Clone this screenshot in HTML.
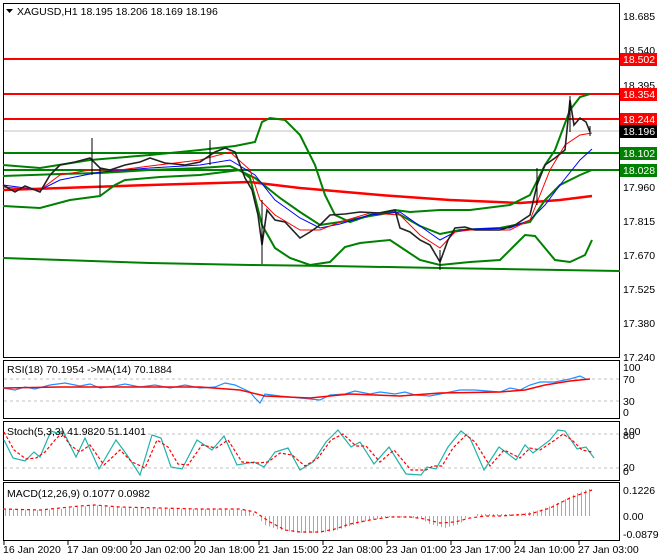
<!DOCTYPE html>
<html><head><meta charset="utf-8"><style>
html,body{margin:0;padding:0;background:#fff;width:660px;height:560px;overflow:hidden}
svg text{font-family:"Liberation Sans",sans-serif;font-size:10.5px;fill:#000}
</style></head><body>
<svg width="660" height="560" viewBox="0 0 660 560" xmlns="http://www.w3.org/2000/svg">
<defs>
<pattern id="bars" x="0" y="0" width="4" height="10" patternUnits="userSpaceOnUse">
<rect x="1" y="0" width="1" height="10" fill="#a8a8a8"/>
</pattern>
</defs>
<rect width="660" height="560" fill="#fff"/>
<g fill="none" stroke="#000" stroke-width="1">
<rect x="3.5" y="3.5" width="616" height="354"/>
<rect x="3.5" y="360.5" width="616" height="58"/>
<rect x="3.5" y="421.5" width="616" height="59"/>
<rect x="3.5" y="482.5" width="616" height="58"/>
</g>
<g fill="none">
<line x1="4" y1="131" x2="619" y2="131" stroke="#c0c0c0"/>
<line x1="4" y1="59" x2="619" y2="59" stroke="#f00" stroke-width="2"/>
<line x1="4" y1="94" x2="619" y2="94" stroke="#f00" stroke-width="2"/>
<line x1="4" y1="119" x2="619" y2="119" stroke="#f00" stroke-width="2"/>
<line x1="4" y1="153" x2="619" y2="153" stroke="#008000" stroke-width="2"/>
<line x1="4" y1="170" x2="619" y2="170" stroke="#008000" stroke-width="2"/>
<polyline stroke="#008000" stroke-width="2" points="3,258 150,263 250,265 330,266 440,268 620,271"/>
<polyline stroke="#f00" stroke-width="2.5" points="3,190 150,185 250,182 300,188 380,195 450,200 520,203 560,200 592,196"/>
<polyline stroke="#008000" stroke-width="2" points="3,165 40,168 90,160 150,155 200,150 235,146 255,142 262,122 270,118 285,120 300,135 315,165 325,195 335,215 350,222 370,215 395,210 410,212 440,210 470,210 510,205 530,195 545,165 555,150 570,110 580,97 590,94"/>
<polyline stroke="#008000" stroke-width="2" points="3,206 40,208 70,200 100,196 115,185 125,180 160,177 200,175 240,170 250,178 262,225 275,248 290,258 310,265 330,262 345,247 360,243 390,240 405,250 420,260 440,265 470,262 500,260 515,245 525,235 535,236 545,248 555,260 570,262 585,255 592,240"/>
<polyline stroke="#008000" stroke-width="2" points="3,176 60,174 100,173 150,170 200,168 230,166 255,178 280,198 300,212 320,225 340,222 370,216 395,212 420,226 440,234 460,230 500,228 530,222 545,200 560,185 580,175 592,170"/>
<polyline stroke="#00f" stroke-width="1" points="3,185 40,190 60,180 100,172 150,168 200,165 230,160 255,175 275,200 300,218 320,228 340,224 370,215 400,212 420,226 440,240 455,232 470,229 510,228 530,220 545,205 560,185 580,160 592,149"/>
<polyline stroke="#f00" stroke-width="1" points="3,187 40,190 60,175 90,170 120,170 150,166 200,160 230,152 250,170 260,200 275,215 300,230 320,230 340,222 370,213 400,215 420,235 440,248 455,232 470,230 510,230 530,220 540,195 550,170 565,145 580,135 592,133"/>
</g>
<polyline fill="none" stroke="#222" stroke-width="1.6" points="3,185 15,192 25,186 40,192 50,175 60,165 75,162 90,158 100,168 110,170 125,165 140,162 150,158 165,163 185,165 200,162 215,152 225,148 235,152 245,178 252,190 258,215 262,245 267,210 275,220 285,222 300,238 310,232 320,225 330,215 345,214 360,212 380,213 395,210 400,228 410,232 420,240 430,245 440,262 448,240 455,228 465,227 475,230 500,230 515,225 530,215 537,185 545,165 555,158 565,150 570,100 574,125 580,118 586,122 590,132"/>
<g stroke="#000" stroke-width="1">
<line x1="92" y1="138" x2="92" y2="175"/><line x1="100" y1="168" x2="100" y2="195"/>
<line x1="262" y1="200" x2="262" y2="264"/><line x1="210" y1="140" x2="210" y2="165"/>
<line x1="440" y1="250" x2="440" y2="270"/><line x1="570" y1="96" x2="570" y2="132"/>
<line x1="537" y1="168" x2="537" y2="205"/><line x1="590" y1="126" x2="590" y2="136"/>
</g>
<g>
<text x="623" y="20">18.685</text><text x="623" y="54">18.540</text>
<text x="623" y="89">18.395</text><text x="623" y="191">17.960</text>
<text x="623" y="225">17.815</text><text x="623" y="259">17.670</text>
<text x="623" y="293">17.525</text><text x="623" y="327">17.380</text>
<text x="623" y="361">17.240</text>
<rect x="620" y="53" width="37" height="13" fill="#f00"/><text x="623" y="63" style="fill:#fff">18.502</text>
<rect x="620" y="88" width="37" height="13" fill="#f00"/><text x="623" y="98" style="fill:#fff">18.354</text>
<rect x="620" y="113" width="37" height="13" fill="#f00"/><text x="623" y="123" style="fill:#fff">18.244</text>
<rect x="620" y="125" width="37" height="13" fill="#000"/><text x="623" y="135" style="fill:#fff">18.196</text>
<rect x="620" y="147" width="37" height="13" fill="#008000"/><text x="623" y="157" style="fill:#fff">18.102</text>
<rect x="620" y="164" width="37" height="13" fill="#008000"/><text x="623" y="174" style="fill:#fff">18.028</text>
</g>
<polygon points="6,9 13,9 9.5,13" fill="#000"/>
<text x="17" y="15">XAGUSD,H1  18.195 18.206 18.169 18.196</text>
<!-- RSI -->
<g fill="none">
<line x1="4" y1="379" x2="619" y2="379" stroke="#c0c0c0" stroke-dasharray="3,3"/>
<line x1="4" y1="401" x2="619" y2="401" stroke="#c0c0c0" stroke-dasharray="3,3"/>
<polyline stroke="#1e90ff" stroke-width="1.2" points="3,388 15,390 25,387 35,389 50,385 65,383 80,386 90,384 100,388 115,386 125,384 140,387 155,385 170,388 185,385 200,388 215,387 225,383 235,385 250,392 255,398 260,403 265,394 280,396 300,398 320,400 330,395 345,394 355,391 370,394 380,392 395,394 405,392 415,395 430,396 440,394 450,392 460,390 475,390 500,392 510,388 520,390 530,385 540,382 555,382 570,379 580,376 586,379"/>
<polyline stroke="#f00" stroke-width="1.5" points="3,388 60,387 120,387 200,387 240,390 265,396 310,398 350,394 400,396 440,393 500,392 525,390 545,385 570,381 590,379"/>
</g>
<text x="7" y="373">RSI(18) 70.1954  -&gt;MA(14) 70.1884</text>
<text x="623" y="371">100</text><text x="623" y="383">70</text><text x="623" y="405">30</text><text x="623" y="416">0</text>
<!-- Stoch -->
<g fill="none">
<line x1="4" y1="434" x2="619" y2="434" stroke="#c0c0c0" stroke-dasharray="3,3"/>
<line x1="4" y1="468" x2="619" y2="468" stroke="#c0c0c0" stroke-dasharray="3,3"/>
<polyline stroke="#20b2aa" stroke-width="1.2" points="4,440 13,458 25,461 34,452 40,457 51,431 57,433 63,431 76,457 85,438 99,469 116,440 127,455 140,475 152,435 161,438 171,467 182,469 197,440 212,450 224,436 237,465 254,462 264,467 275,452 288,448 300,470 313,462 326,442 338,430 351,447 360,442 374,464 389,447 406,474 421,475 427,467 436,469 448,447 461,431 470,438 484,470 499,447 516,460 525,445 533,453 550,440 558,430 565,431 577,449 586,447 594,458"/>
<polyline stroke="#f00" stroke-width="1.2" stroke-dasharray="3,2" points="4,432 14,450 26,459 36,458 45,452 55,440 62,433 70,445 80,452 90,445 104,465 120,450 132,462 145,468 157,440 168,447 178,464 188,465 202,445 216,448 228,440 242,462 258,463 268,462 280,453 292,455 305,466 318,458 331,440 343,434 356,446 366,446 380,462 394,450 411,470 426,470 433,466 442,466 453,448 466,435 475,442 490,466 504,450 520,458 530,448 540,450 555,440 563,434 572,440 582,450 592,452"/>
</g>
<text x="7" y="435">Stoch(5,3,3) 41.9820 51.1401</text>
<text x="623" y="435">100</text><text x="623" y="439">80</text><text x="623" y="471">20</text><text x="623" y="475">0</text>
<!-- MACD -->
<polygon fill="url(#bars)" points="4,509 40,510 60,509 80,507 95,505 110,507 130,508 200,509 250,510 257,516 257,516 265,525 280,530 300,533 320,533 335,531 350,526 370,520 390,517 420,518 430,524 445,528 460,524 468,516 475,516 475,514 520,514 540,510 560,502 575,494 592,488 592,516 4,516"/>
<polyline fill="none" stroke="#f00" stroke-width="1.2" stroke-dasharray="3,3" points="3,509 40,510 60,508 80,506 95,505 120,507 160,508 200,509 240,509 255,512 270,522 285,530 300,532 320,532 335,529 350,524 370,520 390,517 410,517 425,519 440,523 455,522 470,518 485,516 500,516 530,514 550,508 570,498 592,490"/>
<text x="7" y="497">MACD(12,26,9) 0.1077 0.0982</text>
<text x="623" y="494">0.1226</text><text x="623" y="520">0.00</text><text x="623" y="538">-0.0879</text>
<g stroke="#000"><path d="M4,541V545M68,541V545M131,541V545M195,541V545M259,541V545M323,541V545M387,541V545M451,541V545M515,541V545M579,541V545"/></g>
<text x="3" y="553">16 Jan 2020</text><text x="67" y="553">17 Jan 09:00</text>
<text x="130" y="553">20 Jan 02:00</text><text x="194" y="553">20 Jan 18:00</text>
<text x="258" y="553">21 Jan 15:00</text><text x="322" y="553">22 Jan 08:00</text>
<text x="386" y="553">23 Jan 01:00</text><text x="450" y="553">23 Jan 17:00</text>
<text x="514" y="553">24 Jan 10:00</text><text x="578" y="553">27 Jan 03:00</text>
</svg>
</body></html>
